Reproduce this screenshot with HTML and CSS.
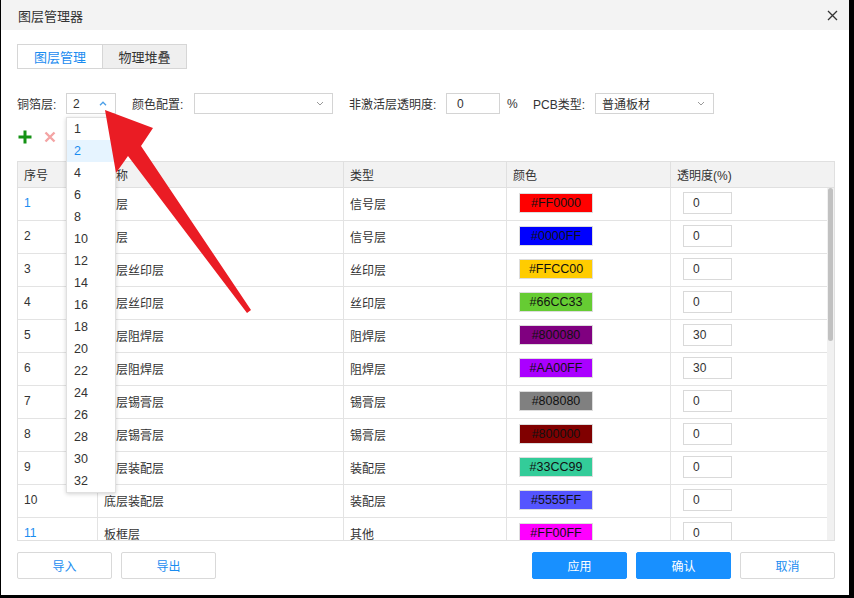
FILE: index.html
```html
<!DOCTYPE html>
<html lang="zh">
<head>
<meta charset="utf-8">
<title>图层管理器</title>
<link rel="stylesheet" href="styles.css">
</head>
<body>
<div class="dialog">
  <div class="titlebar">
    <span class="title">图层管理器</span>
    <svg class="close" width="11" height="11" viewBox="0 0 11 11"><path d="M1 1L10 10M10 1L1 10" stroke="#333" stroke-width="1.3"/></svg>
  </div>
  <div class="main">
    <div class="tabs">
      <div class="tab active">图层管理</div>
      <div class="tab">物理堆叠</div>
    </div>
    <div class="controls">
      <span class="lbl l1">铜箔层:</span>
      <div class="select sel-layers"><span>2</span>
        <svg class="chev" width="8" height="5" viewBox="0 0 8 5"><path d="M1 4.2L4 1.2L7 4.2" fill="none" stroke="#4a9fe8" stroke-width="1.3"/></svg>
      </div>
      <span class="lbl l2">颜色配置:</span>
      <div class="select sel-color"><span></span>
        <svg class="chev" width="8" height="5" viewBox="0 0 8 5"><path d="M1 1L4 4L7 1" fill="none" stroke="#999" stroke-width="1"/></svg>
      </div>
      <span class="lbl l3">非激活层透明度:</span>
      <div class="input sel-opacity">0</div>
      <span class="pct">%</span>
      <span class="lbl l4">PCB类型:</span>
      <div class="select sel-pcb"><span>普通板材</span>
        <svg class="chev" width="8" height="5" viewBox="0 0 8 5"><path d="M1 1L4 4L7 1" fill="none" stroke="#999" stroke-width="1"/></svg>
      </div>
    </div>
    <div class="toolbar">
      <svg width="14" height="14" viewBox="0 0 14 14"><path d="M7 0.5V13.5M0.5 7H13.5" stroke="#149214" stroke-width="3"/></svg>
      <svg class="del" width="12" height="12" viewBox="0 0 12 12"><path d="M1.5 1.5L10.5 10.5M10.5 1.5L1.5 10.5" stroke="#f4a4a4" stroke-width="2.4"/></svg>
    </div>
    <div class="table">
      <div class="thead">
        <div class="th">序号</div>
        <div class="th">名称</div>
        <div class="th">类型</div>
        <div class="th">颜色</div>
        <div class="th last">透明度(%)</div>
      </div>
      <div class="tbody">
        <div class="rows">
          <div class="tr"><div class="td num blue">1</div><div class="td">顶层</div><div class="td">信号层</div><div class="td"><span class="sw" style="background:#FF0000">#FF0000</span></div><div class="td"><span class="op">0</span></div></div>
          <div class="tr"><div class="td num">2</div><div class="td">底层</div><div class="td">信号层</div><div class="td"><span class="sw" style="background:#0000FF">#0000FF</span></div><div class="td"><span class="op">0</span></div></div>
          <div class="tr"><div class="td num">3</div><div class="td">顶层丝印层</div><div class="td">丝印层</div><div class="td"><span class="sw" style="background:#FFCC00">#FFCC00</span></div><div class="td"><span class="op">0</span></div></div>
          <div class="tr"><div class="td num">4</div><div class="td">底层丝印层</div><div class="td">丝印层</div><div class="td"><span class="sw" style="background:#66CC33">#66CC33</span></div><div class="td"><span class="op">0</span></div></div>
          <div class="tr"><div class="td num">5</div><div class="td">顶层阻焊层</div><div class="td">阻焊层</div><div class="td"><span class="sw" style="background:#800080">#800080</span></div><div class="td"><span class="op">30</span></div></div>
          <div class="tr"><div class="td num">6</div><div class="td">底层阻焊层</div><div class="td">阻焊层</div><div class="td"><span class="sw" style="background:#AA00FF">#AA00FF</span></div><div class="td"><span class="op">30</span></div></div>
          <div class="tr"><div class="td num">7</div><div class="td">顶层锡膏层</div><div class="td">锡膏层</div><div class="td"><span class="sw" style="background:#808080">#808080</span></div><div class="td"><span class="op">0</span></div></div>
          <div class="tr"><div class="td num">8</div><div class="td">底层锡膏层</div><div class="td">锡膏层</div><div class="td"><span class="sw" style="background:#800000">#800000</span></div><div class="td"><span class="op">0</span></div></div>
          <div class="tr"><div class="td num">9</div><div class="td">顶层装配层</div><div class="td">装配层</div><div class="td"><span class="sw" style="background:#33CC99">#33CC99</span></div><div class="td"><span class="op">0</span></div></div>
          <div class="tr"><div class="td num">10</div><div class="td">底层装配层</div><div class="td">装配层</div><div class="td"><span class="sw" style="background:#5555FF">#5555FF</span></div><div class="td"><span class="op">0</span></div></div>
          <div class="tr"><div class="td num blue">11</div><div class="td">板框层</div><div class="td">其他</div><div class="td"><span class="sw" style="background:#FF00FF">#FF00FF</span></div><div class="td"><span class="op">0</span></div></div>
        </div>
        <div class="scrollbar"><div class="thumb"></div></div>
      </div>
    </div>
  </div>
  <div class="footer">
    <div class="btn">导入</div>
    <div class="btn">导出</div>
    <div class="spacer"></div>
    <div class="btn primary">应用</div>
    <div class="btn primary">确认</div>
    <div class="btn">取消</div>
  </div>

  <div class="dropdown">
    <div class="opt">1</div>
    <div class="opt sel">2</div>
    <div class="opt">4</div>
    <div class="opt">6</div>
    <div class="opt">8</div>
    <div class="opt">10</div>
    <div class="opt">12</div>
    <div class="opt">14</div>
    <div class="opt">16</div>
    <div class="opt">18</div>
    <div class="opt">20</div>
    <div class="opt">22</div>
    <div class="opt">24</div>
    <div class="opt">26</div>
    <div class="opt">28</div>
    <div class="opt">30</div>
    <div class="opt">32</div>
  </div>

  <svg class="arrow" width="848" height="595" viewBox="0 0 848 595">
    <polygon points="105,110 153,128 141,146 251,310 247,313 128,156 116,173" fill="#ea1c24"/>
  </svg>
</div>
</body>
</html>
```

FILE: styles.css
```css
* { box-sizing: border-box; }
html, body {
  margin: 0;
  padding: 0;
}
body {
  background: #000;
  width: 854px;
  height: 598px;
  overflow: hidden;
  font-family: "Liberation Sans", "Noto Sans CJK SC", sans-serif;
  font-size: 12px;
  color: #333;
}
.dialog {
  position: relative;
  margin-left: 1px;
  width: 848px;
  height: 595px;
  background: #fff;
  display: flex;
  flex-direction: column;
}
.titlebar {
  height: 30px;
  flex: none;
  background: #f3f3f3;
  display: flex;
  align-items: center;
  justify-content: space-between;
  padding: 0 11px 0 17px;
}
.title {
  font-size: 13px;
  color: #333;
}
.main {
  padding: 0 14px 0 16px;
  flex: none;
}
.tabs {
  margin-top: 14px;
  height: 25px;
  display: flex;
}
.tab {
  width: 85px;
  height: 25px;
  border: 1px solid #d6d6d6;
  background: #efefef;
  display: flex;
  align-items: center;
  justify-content: center;
  font-size: 13px;
  color: #333;
}
.tab.active {
  background: #fff;
  color: #1a8cf0;
  border-right: none;
}
.controls {
  margin-top: 24px;
  height: 21px;
  display: flex;
  align-items: center;
}
.lbl { color: #333; white-space: nowrap; flex: none; }
.l1 { width: 49px; }
.l2 { width: 62px; margin-left: 16px; }
.l3 { width: 97px; margin-left: 16px; }
.l4 { width: 62px; }
.select, .input {
  height: 21px;
  flex: none;
  border: 1px solid #d4d4d4;
  display: flex;
  align-items: center;
  justify-content: space-between;
  padding: 0 8px 0 6px;
  color: #333;
  background: #fff;
}
.sel-layers { width: 50px; }
.sel-color { width: 139px; }
.sel-opacity { width: 54px; padding-left: 10px; }
.pct { width: 26px; margin-left: 7px; flex: none; }
.sel-pcb { width: 119px; }
.toolbar {
  height: 47px;
  display: flex;
  align-items: flex-start;
  padding-top: 16px;
  padding-left: 1px;
  gap: 12px;
}
.toolbar .del { margin-top: 1px; }
.table {
  height: 380px;
  border: 1px solid #e0e0e0;
  overflow: hidden;
  display: flex;
  flex-direction: column;
}
.thead {
  height: 26px;
  flex: none;
  display: grid;
  grid-template-columns: 80px 246px 163px 164px 1fr;
  background: #f2f2f2;
  border-bottom: 1px solid #e0e0e0;
}
.th {
  border-right: 1px solid #e0e0e0;
  padding-left: 6px;
  display: flex;
  align-items: center;
  color: #333;
}
.th.last { border-right: none; }
.tbody {
  flex: 1;
  display: flex;
  overflow: hidden;
}
.rows {
  width: 809px;
  flex: none;
}
.tr {
  height: 33px;
  display: grid;
  grid-template-columns: 80px 246px 163px 164px 156px;
  border-bottom: 1px solid #e3e3e3;
}
.td {
  border-right: 1px solid #e3e3e3;
  padding-left: 6px;
  display: flex;
  align-items: center;
  padding-bottom: 2px;
}
.td:last-child { border-right: none; }
.td.num { color: #333; }
.td.blue { color: #1a8cf0; }
.sw {
  margin-left: 6px;
  width: 74px;
  height: 20px;
  border: 1px solid #ddd;
  display: flex;
  align-items: center;
  justify-content: center;
  color: #111;
  font-size: 12.5px;
}
.op {
  margin-left: 6px;
  width: 49px;
  height: 22px;
  border: 1px solid #d9d9d9;
  display: flex;
  align-items: center;
  padding-left: 9px;
  color: #333;
}
.scrollbar {
  flex: 1;
  background: #f1f1f1;
  padding: 0 1px;
}
.thumb {
  height: 153px;
  background: #c1c1c1;
  border-radius: 3px;
}
.footer {
  flex: none;
  height: 54px;
  padding: 11px 14px 16px 16px;
  display: flex;
  gap: 9px;
}
.spacer { flex: 1; }
.btn {
  width: 95px;
  height: 27px;
  border: 1px solid #d9d9d9;
  border-radius: 2px;
  display: flex;
  align-items: center;
  justify-content: center;
  color: #1a8cf0;
  background: #fff;
}
.btn.primary {
  background: #1890ff;
  border-color: #1890ff;
  color: #fff;
}
.dropdown {
  position: absolute;
  left: 65px;
  top: 117px;
  width: 50px;
  background: #fff;
  border: 1px solid #e0e0e0;
  box-shadow: 0 1px 4px rgba(0,0,0,0.18);
}
.opt {
  height: 22px;
  line-height: 22px;
  padding-left: 7px;
  color: #333;
  font-size: 12.5px;
}
.opt.sel {
  background: #e6f4ff;
  color: #1a8cf0;
}
.arrow {
  position: absolute;
  left: -1px;
  top: 0;
  pointer-events: none;
}
```
